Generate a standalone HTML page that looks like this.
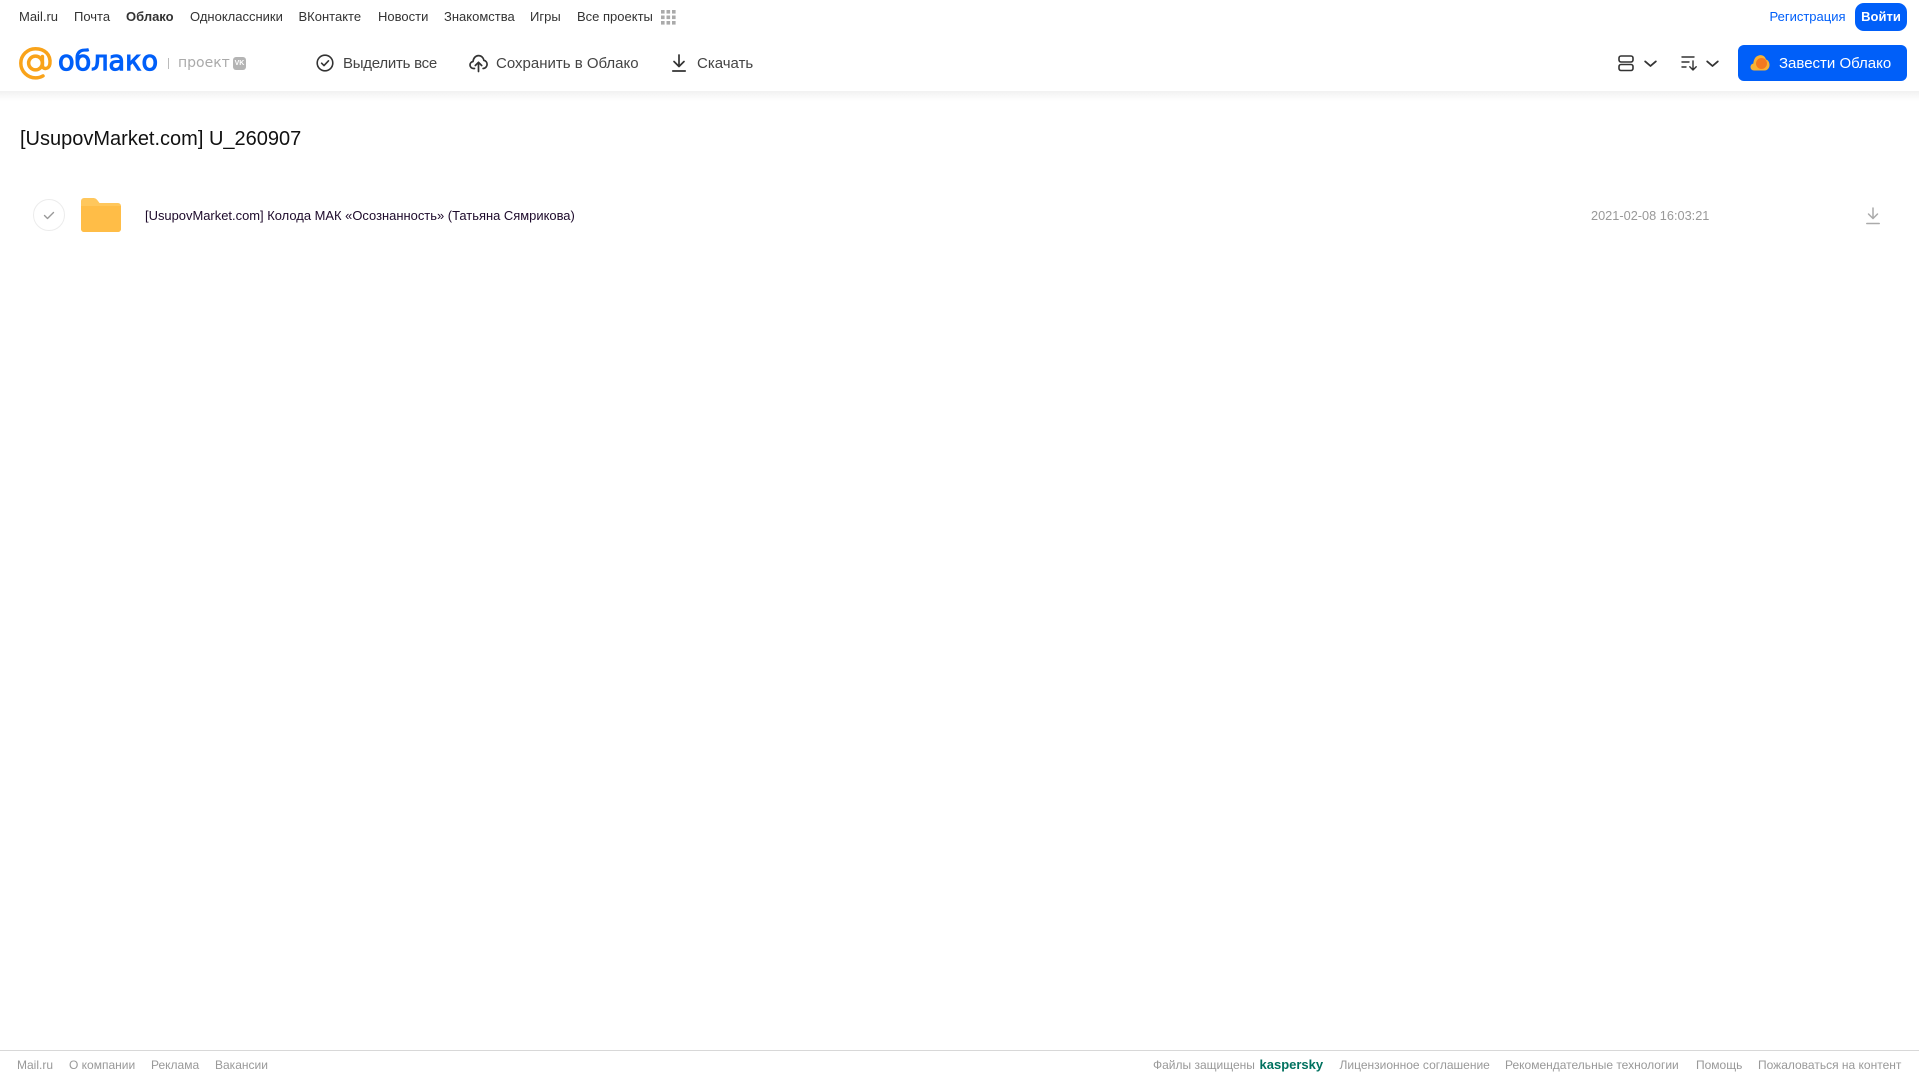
<!DOCTYPE html>
<html lang="ru">
<head>
<meta charset="utf-8">
<title>[UsupovMarket.com] U_260907</title>
<style>
html,body{margin:0;padding:0;background:#fff}
body{width:1919px;height:1079px;position:relative;overflow:hidden;font-family:"Liberation Sans",Arial,sans-serif}
.t{position:absolute;white-space:nowrap;line-height:16px}
.n{top:9px;font-size:13px;color:#333}
.a{top:55px;font-size:15px;color:#444}
.f{top:1057px;font-size:12px;color:#999}
svg{position:absolute;overflow:visible}
#shade{position:absolute;left:0;top:91px;width:1919px;height:10px;background:linear-gradient(#f1f1f1,#fff)}
.btn{position:absolute;background:#005ff9;color:#fff;white-space:nowrap}
</style>
</head>
<body>
<div id="shade"></div>

<span class="t n" style="left:19px">Mail.ru</span>
<span class="t n" style="left:74px">Почта</span>
<span class="t n" style="left:126px;font-weight:bold">Облако</span>
<span class="t n" style="left:190px">Одноклассники</span>
<span class="t n" style="left:298.500px">ВКонтакте</span>
<span class="t n" style="left:378px">Новости</span>
<span class="t n" style="left:444px">Знакомства</span>
<span class="t n" style="left:530px">Игры</span>
<span class="t n" style="left:577px">Все проекты</span>
<svg style="left:661px;top:10px" width="15" height="15" fill="#aaa">
<rect x="0" y="0" width="3.6" height="3.6"/><rect x="5.5" y="0" width="3.6" height="3.6"/><rect x="11" y="0" width="3.6" height="3.6"/>
<rect x="0" y="5.5" width="3.6" height="3.6"/><rect x="5.5" y="5.5" width="3.6" height="3.6"/><rect x="11" y="5.5" width="3.6" height="3.6"/>
<rect x="0" y="11" width="3.6" height="3.6"/><rect x="5.5" y="11" width="3.6" height="3.6"/><rect x="11" y="11" width="3.6" height="3.6"/>
</svg>

<span class="t n" style="left:1769.500px;color:#005ff9">Регистрация</span>
<div class="btn" style="left:1855px;top:3px;width:52px;height:28px;border-radius:9px;font-size:13px;font-weight:bold;line-height:28px;text-align:center">Войти</div>

<!-- logo -->
<svg style="left:19px;top:47px" width="33" height="33" viewBox="0 0 33 33" fill="none">
<circle cx="16.5" cy="16" r="6.9" stroke="#f9a31a" stroke-width="3.500"/>
<path d="M23.4 9.500V18.500c0 4.200 6.800 4.200 7.500-1.700C32 7.500 25.500 1.700 16.500 1.700 8.600 1.700 1.800 8.100 1.800 16.200c0 8.200 6.800 14.700 14.800 14.700 2.800 0 5.200-.7 7.400-2" stroke="#f9a31a" stroke-width="3.500" stroke-linecap="round"/>
</svg>
<svg style="left:58px;top:40px" width="102" height="40">
<text x="0" y="30" font-family="DejaVu Sans, sans-serif" font-size="28" fill="#005ff9" stroke="#005ff9" stroke-width="1.100" textLength="100" lengthAdjust="spacingAndGlyphs">облако</text>
</svg>
<div style="position:absolute;left:168px;top:58px;width:1px;height:11px;background:#bbb"></div>
<span class="t" style="left:178px;top:55px;font-family:'DejaVu Sans',sans-serif;font-size:14px;color:#aaa">проект</span>
<div style="position:absolute;left:233px;top:57px;width:13px;height:13px;border-radius:3px;background:#b4b4b4;color:#fff;font-size:7px;font-weight:bold;line-height:13px;text-align:center">VK</div>

<!-- actions -->
<svg style="left:316px;top:54px" width="18" height="18" fill="none" stroke="#333" stroke-width="1.6" stroke-linecap="round" stroke-linejoin="round">
<circle cx="9" cy="9" r="7.8"/><path d="M5.6 9.2l2.4 2.4 4.500-4.800"/>
</svg>
<span class="t a" style="left:343px;letter-spacing:-.25px;top:56px">Выделить все</span>
<svg style="left:469px;top:54px" width="19" height="18" fill="none" stroke="#333" stroke-width="1.7" stroke-linecap="round" stroke-linejoin="round">
<path d="M5.500 14.500H4.600C2.600 14.500 1 13 1 11c0-1.800 1.300-3.200 3-3.500C4.400 4 6.600 1.600 9.500 1.600c2.800 0 5 2.100 5.400 4.800 1.900.3 3.200 2 3.200 3.900 0 2.300-1.800 4.200-4 4.200"/>
<path d="M9.500 17.500V8.500M6.300 11.500l3.200-3.200 3.200 3.200"/>
</svg>
<span class="t a" style="left:496px;top:56px">Сохранить в Облако</span>
<svg style="left:671px;top:54px" width="16" height="18" fill="none" stroke="#333" stroke-width="1.7" stroke-linecap="round" stroke-linejoin="round">
<path d="M8 1v11M3 7.500L8 12.500l5-5M1.800 17h12.400"/>
</svg>
<span class="t a" style="left:697px;top:56px">Скачать</span>

<!-- right controls -->
<svg style="left:1618px;top:55px" width="17" height="17" fill="none" stroke="#333" stroke-width="1.6">
<rect x="1" y="1" width="14" height="6" rx="2"/><rect x="1" y="9.500" width="14" height="6" rx="2"/>
</svg>
<svg style="left:1643.500px;top:60px" width="13" height="8" fill="none" stroke="#333" stroke-width="1.8" stroke-linecap="round" stroke-linejoin="round"><path d="M1.200 1.400L6.500 6l5.300-4.600"/></svg>
<svg style="left:1681px;top:55px" width="17" height="16" fill="none" stroke="#333" stroke-width="1.4" stroke-linecap="round" stroke-linejoin="round">
<path d="M1 2h12M1 7h7M1 12h4M12 6v9M8.800 11.800L12 15l3.200-3.200"/>
</svg>
<svg style="left:1705.500px;top:60px" width="13" height="8" fill="none" stroke="#333" stroke-width="1.8" stroke-linecap="round" stroke-linejoin="round"><path d="M1.200 1.400L6.500 6l5.300-4.600"/></svg>

<div class="btn" style="left:1738px;top:45px;width:169px;height:36px;border-radius:6px"></div>
<svg style="left:1750px;top:54px" width="20" height="18">
<path d="M4.200 16.500C1.900 16.500.5 14.900.5 13c0-1.800 1.200-3.100 2.800-3.500C3.700 6 5 2 9.500 1.200c3.500-.5 5.700 1.500 6.500 4.300 2.200.6 3.500 2.800 3.500 5.500 0 3-2 5.500-5 5.500z" fill="#f9b233"/>
<circle cx="11.500" cy="9.500" r="5.500" fill="#f4791f"/>
</svg>
<span class="t" style="left:1779px;top:55.500px;font-size:15px;color:#fff">Завести Облако</span>

<!-- title -->
<div class="t" style="left:20px;top:126px;font-size:20px;line-height:26px;color:#111">[UsupovMarket.com] U_260907</div>

<!-- row -->
<svg style="left:33px;top:199px" width="32" height="32" fill="none">
<circle cx="16" cy="16" r="15.500" stroke="#ececec"/>
<path d="M11.500 16.500l3 3 6-6" stroke="#999" stroke-width="1.400" stroke-linecap="round" stroke-linejoin="round"/>
</svg>
<svg style="left:81px;top:198px" width="40" height="34">
<path d="M0 3a3 3 0 0 1 3-3h9c2.500 0 3.500 1 5 3l1.500 2H37a3 3 0 0 1 3 3v23a3 3 0 0 1-3 3H3a3 3 0 0 1-3-3z" fill="#ffc75c"/>
<path d="M0 8h40v23a3 3 0 0 1-3 3H3a3 3 0 0 1-3-3z" fill="#ffbd47"/>
</svg>
<span class="t" style="left:145px;top:208px;font-size:12.950px;color:#1d0a2b">[UsupovMarket.com] Колода МАК «Осознанность» (Татьяна Сямрикова)</span>
<span class="t" style="left:1591px;top:208px;font-size:12.750px;color:#999">2021-02-08 16:03:21</span>
<svg style="left:1866px;top:207px" width="14" height="18" fill="none" stroke="#aaa" stroke-width="1.500" stroke-linecap="round" stroke-linejoin="round">
<path d="M7 1v10.500M2.500 7L7 11.500 11.500 7M.8 16.500h12.400"/>
</svg>

<!-- footer -->
<div style="position:absolute;left:0;top:1050px;width:1919px;height:1px;background:#d8d8d8"></div>
<span class="t f" style="left:17px">Mail.ru</span>
<span class="t f" style="left:69px">О компании</span>
<span class="t f" style="left:151px">Реклама</span>
<span class="t f" style="left:215px">Вакансии</span>
<span class="t f" style="left:1153px">Файлы защищены</span>
<span class="t f" style="left:1259.500px;font-size:13px;font-weight:bold;color:#00715f">kaspersky</span>
<span class="t f" style="left:1339.500px">Лицензионное соглашение</span>
<span class="t f" style="left:1505px">Рекомендательные технологии</span>
<span class="t f" style="left:1696px">Помощь</span>
<span class="t f" style="left:1758px">Пожаловаться на контент</span>
</body>
</html>
